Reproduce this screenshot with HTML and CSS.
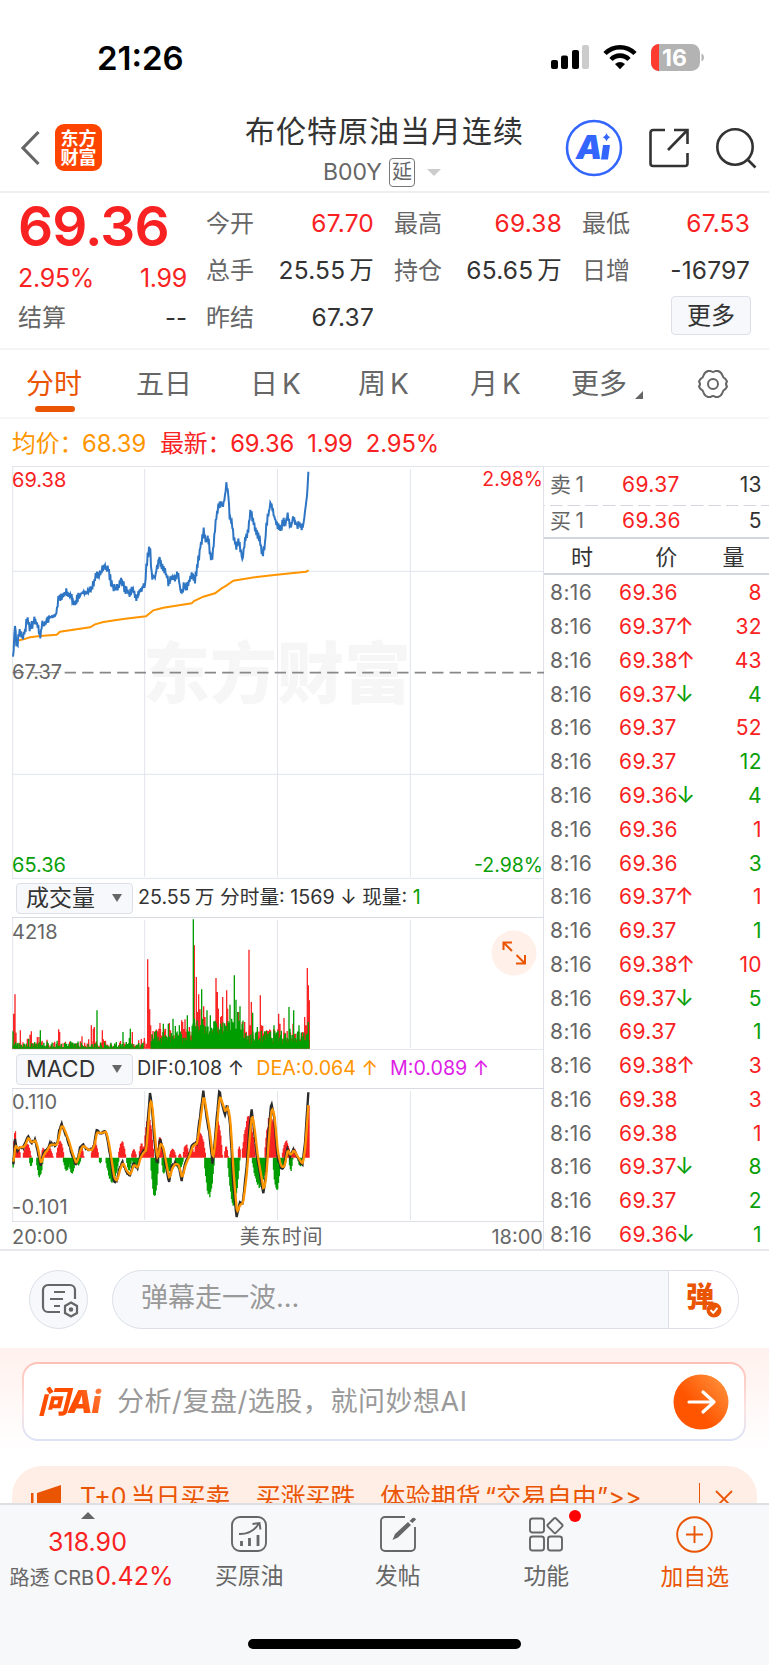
FILE: index.html
```html
<!DOCTYPE html>
<html lang="zh-CN">
  <head>
    <meta charset="utf-8">
    <title>布伦特原油当月连续</title>
    <link rel="stylesheet" href="styles.css">
  </head>
<body>
    <!-- 状态栏 -->
    <div class="status">
        <span class="clock">21:26</span>
        <svg class="status-icons" width="154" height="28" viewBox="0 0 154 28">
            <rect x="1" y="17" width="7" height="9" rx="2"/>
            <rect x="11" y="12.500" width="7" height="13.500" rx="2"/>
            <rect x="22" y="7" width="7" height="19" rx="2"/>
            <rect x="32" y="2" width="7" height="24" rx="2" fill="#ccc"/>
            <g fill="none" stroke="#000" stroke-width="4.600">
                <path d="M55 10.500a21 21 0 0 1 30 0"/>
                <path d="M61 16.500a12.500 12.500 0 0 1 18 0"/>
            </g>
            <path d="M70 26.200l-5-5.200q5-4 10 0z"/>
            <rect x="101" y="1" width="49" height="27" rx="8.500" fill="#b3b3b3"/>
            <path d="M109 1h-0.500a8 8 0 0 0-7.500 8v11a8 8 0 0 0 7.500 8h0.500z" fill="#ff3b30"/>
            <path d="M151.500 10.500q2.500 1 2.500 4t-2.500 4z" fill="#b3b3b3"/>
            <text x="124.500" y="22.500" class="battery-text">16</text>
        </svg>
    </div>

    <!-- 标题栏 -->
    <div class="header">
        <svg class="back" width="22" height="36" viewBox="0 0 22 36"><path d="M18.500 2L3 18l15.500 16" fill="none" stroke="#666" stroke-width="3.200"/></svg>
        <div class="logo">东方<br>财富</div>
        <div class="title">
            <div class="name">布伦特原油当月连续</div>
            <div class="code"><span>B00Y</span><i class="delay">延</i><i class="drop"></i></div>
        </div>
        <div class="tools">
            <svg width="58" height="58" viewBox="0 0 58 58">
                <circle cx="29" cy="29" r="27" fill="none" stroke="#3366ff" stroke-width="2.600"/>
                <text x="11" y="39.500" class="ai-text">A</text>
                <path d="M38 26h7l-2 14.500h-7zM41.500 14q1 3.500 4.200 4.200-3.200.8-4.200 4.300-1-3.500-4.200-4.300 3.200-.7 4.200-4.200z" fill="#3366ff"/>
            </svg>
            <svg width="40" height="40" viewBox="0 0 40 40" fill="none" stroke="#333" stroke-width="2.600">
                <path d="M16 2H4a2.500 2.500 0 0 0-2.500 2.500v31A2.500 2.500 0 0 0 4 38h32a2.500 2.500 0 0 0 2.500-2.500V25M25 2h13.500v14M38 2.500L19 22"/>
            </svg>
            <svg width="42" height="42" viewBox="0 0 42 42" fill="none" stroke="#333" stroke-width="2.600">
                <circle cx="20" cy="20" r="17.700"/><path d="M32 32l8.500 8.500"/>
            </svg>
        </div>
    </div>

    <!-- 行情 -->
    <div class="quote">
        <div class="main">
            <div class="price">69.36</div>
            <div class="pair red"><span>2.95%</span><span>1.99</span></div>
            <div class="pair"><label>结算</label><span>--</span></div>
        </div>
        <div class="cells">
            <div><label>今开</label><span class="red">67.70</span></div>
            <div><label>最高</label><span class="red">69.38</span></div>
            <div><label>最低</label><span class="red">67.53</span></div>
            <div><label>总手</label><span>25.55<i class="gap"></i>万</span></div>
            <div><label>持仓</label><span>65.65<i class="gap"></i>万</span></div>
            <div><label>日增</label><span>-16797</span></div>
            <div><label>昨结</label><span>67.37</span></div>
            <div></div>
            <div><button class="more">更多</button></div>
        </div>
    </div>

    <!-- 周期切换 -->
    <div class="tabs">
        <span class="active">分时</span>
        <span>五日</span>
        <span>日<i class="gap"></i>K</span>
        <span>周<i class="gap"></i>K</span>
        <span>月<i class="gap"></i>K</span>
        <span class="tab-more">更多</span>
        <svg width="34" height="32" viewBox="0 0 34 32" fill="none" stroke="#666" stroke-width="2">
            <path d="M12 3h2.500q2.500 1.800 5 0H22q3.500 1.200 4.500 4.500.5 2.500 3 3.500l1.500 2.500q-2 2.500 0 5L29.500 21q-2.500 1-3 3.500-1 3.300-4.500 4.500h-2.500q-2.500-1.800-5 0H12q-3.500-1.200-4.500-4.500-.5-2.500-3-3.500L3 18.500q2-2.500 0-5L4.500 11q2.500-1 3-3.500Q8.500 4.200 12 3z"/>
            <circle cx="17" cy="16" r="5"/>
        </svg>
    </div>

    <div class="summary">
        <span class="orange">均价：</span><span class="orange">68.39</span>
        <span class="red">最新：</span><span class="red">69.36</span><span class="red">1.99</span><span class="red">2.95%</span>
    </div>

    <div class="board">
        <!-- 左侧图表 -->
        <div class="charts">
            <div class="chart chart-price">
                <b class="watermark">东方财富</b>
                <svg id="price" width="532" height="413" viewBox="36 18 1596 1239"></svg>
                <span class="tl red">69.38</span>
                <span class="tr red">2.98%</span>
                <span class="mid">67.37</span>
                <span class="bl green">65.36</span>
                <span class="br green">-2.98%</span>
            </div>
            <div class="bar bar-vol">
                <div class="select"><span>成交量</span><i></i></div>
                <span>25.55<i class="gap"></i>万 分时量: 1569 <em>↓</em> 现量: <span class="green">1</span></span>
            </div>
            <div class="chart chart-vol">
                <svg id="volume" width="532" height="133" viewBox="36 141 1596 399"></svg>
                <span class="tl">4218</span>
                <svg class="expand" width="46" height="46" viewBox="0 0 46 46">
                    <circle cx="23" cy="23" r="22.500" fill="#fff0e9"/>
                    <path d="M12.500 20v-7.500H21M13 13l8 8M34 25v8.500h-9M33.500 33l-8-8" fill="none" stroke="#ea5504" stroke-width="2"/>
                </svg>
            </div>
            <div class="bar bar-macd">
                <div class="select"><span>MACD</span><i></i></div>
                <span>DIF:0.108 <em>↑</em></span>
                <span class="orange">DEA:0.064 <em>↑</em></span>
                <span class="purple">M:0.089 <em>↑</em></span>
            </div>
            <div class="chart chart-macd">
                <svg id="macd" width="532" height="134" viewBox="36 114 1596 402"></svg>
                <span class="tl">0.110</span>
                <span class="bl">-0.101</span>
            </div>
            <div class="times"><span>20:00</span><span class="zone">美东时间</span><span>18:00</span></div>
        </div>

        <!-- 右侧盘口明细 -->
        <div class="detail">
            <div class="row ask"><span>卖<i class="gap"></i>1</span><span class="red">69.37</span><span>13</span></div>
            <div class="row bid"><span>买<i class="gap"></i>1</span><span class="red">69.36</span><span>5</span></div>
            <div class="head"><span>时</span><span>价</span><span>量</span></div>
            <div id="ticks"></div>
        </div>
    </div>

    <!-- 弹幕 -->
    <div class="comment">
        <div class="round">
            <svg width="38" height="36" viewBox="0 0 38 36" fill="none" stroke="#666" stroke-width="2.200">
                <path d="M19 29H7a5 5 0 0 1-5-5V7a5 5 0 0 1 5-5h22a5 5 0 0 1 5 5v9M13 9h11M9 16h13M13 23h6"/>
                <path d="M30 19.500l6 3.500v7l-6 3.500-6-3.500v-7z"/><circle cx="30" cy="26.500" r="1.200" fill="#666"/>
            </svg>
        </div>
        <div class="field">
            <span class="placeholder">弹幕走一波...</span>
            <div class="danmu">弹
                <svg width="16" height="16" viewBox="0 0 16 16"><circle cx="8" cy="8" r="7.500" fill="#ea5504"/><path d="M4.500 8l2.800 2.800 4.200-5" fill="none" stroke="#fff" stroke-width="1.800"/></svg>
            </div>
        </div>
    </div>

    <!-- 问AI -->
    <div class="ask-ai">
        <div class="card">
            <span class="ask-logo">问Ai</span>
            <span class="placeholder">分析/复盘/选股，就问妙想AI</span>
            <svg width="56" height="56" viewBox="0 0 56 56">
                <defs><linearGradient id="go" x1="0.200" y1="0.800" x2="0.900" y2="0.200"><stop offset="0.300" stop-color="#ff5500"/><stop offset="1" stop-color="#ff8833"/></linearGradient></defs>
                <circle cx="28" cy="28" r="27.500" fill="url(#go)"/>
                <path d="M16 28h25M30 18l11 10-11 10" fill="none" stroke="#fff" stroke-width="3.200" stroke-linecap="round" stroke-linejoin="round"/>
            </svg>
        </div>
    </div>

    <!-- 广告条 -->
    <div class="promo-wrap">
        <div class="promo">
            <svg width="32" height="30" viewBox="0 0 32 30" fill="#ea5504"><path d="M0 8h2.500v22H0zM6 8l24-8v30H6z"/></svg>
            <span>T+0<i class="gap"></i>当日买卖</span><span>买涨买跌</span><span>体验期货<i class="gap"></i>“交易自由”&gt;&gt;</span>
            <i class="line"></i>
            <svg width="18" height="18" viewBox="0 0 18 18" stroke="#ea5504" stroke-width="1.800"><path d="M1 1l16 16M17 1L1 17"/></svg>
        </div>
    </div>

    <!-- 底部菜单 -->
    <div class="footer">
        <div class="nav">
            <div class="index">
                <i></i>
                <b class="red">318.90</b>
                <p>路透<i class="gap"></i>CRB<span class="red">0.42%</span></p>
            </div>
            <div class="item">
                <svg width="36" height="36" viewBox="0 0 36 36" fill="none" stroke="#666" stroke-width="1.900">
                    <rect x="1" y="1" width="34" height="34" rx="8"/><path d="M8 18q13 .500 20-10.500M21.500 8l7-1 1 6.500"/><path d="M10.500 30v-5M18.500 30v-8M27 30V19" stroke-width="2.800"/>
                </svg>
                <span>买原油</span>
            </div>
            <div class="item">
                <svg width="36" height="36" viewBox="0 0 36 36" fill="none" stroke="#666" stroke-width="1.900">
                    <path d="M25 1H5a4 4 0 0 0-4 4v26a4 4 0 0 0 4 4h26a4 4 0 0 0 4-4V11"/><path d="M12.500 24l2.500-6L28 6l3 3-13 12.500zM29.500 5l3-3q2.500-1 3.500 1.500L32.500 7z" fill="#666" stroke="none"/>
                </svg>
                <span>发帖</span>
            </div>
            <div class="item">
                <svg width="36" height="36" viewBox="0 0 36 36" fill="none" stroke="#666" stroke-width="1.900">
                    <rect x="2" y="2.500" width="14" height="14" rx="2.500"/><rect x="2" y="20.500" width="14" height="14" rx="2.500"/><rect x="20" y="20.500" width="14" height="14" rx="2.500"/><rect x="21.300" y="3.800" width="11.500" height="11.500" rx="1.500" transform="rotate(45 27 9.500)"/>
                </svg>
                <i class="dot"></i>
                <span>功能</span>
            </div>
            <div class="item add">
                <svg width="37" height="37" viewBox="0 0 37 37" fill="none" stroke="#ea5504" stroke-width="1.900"><circle cx="18.500" cy="18.500" r="17.300"/><path d="M18.500 10v17M10 18.500h17"/></svg>
                <span>加自选</span>
            </div>
        </div>
        <div class="home"></div>
    </div>
    <script src="chart.js"></script>
</body>
</html>
```
FILE: styles.css
```css
* {
    box-sizing: border-box;
    margin: 0;
    padding: 0;
}
body {
    width: 769px;
    height: 1665px;
    overflow: hidden;
    background: #fff;
    color: #333;
    font-family: Inter, "Noto Sans CJK SC", sans-serif;
    font-size: 24px;
    line-height: 1;
    white-space: nowrap;
}
i, em {
    font-style: normal;
}
svg {
    display: block;
    flex: none;
}
.red { color: #f92222 !important; }
.green { color: #0a9f0a !important; }
.orange { color: #ff9500 !important; }
.purple { color: #dc1ee6 !important; }
.gap {
    display: inline-block;
    width: 4px;
}

/* 状态栏 */
.status {
    display: flex;
    justify-content: space-between;
    height: 98px;
    padding: 41px 65px 0 97px;
    color: #000;
}
.clock {
    font-size: 33px;
    font-weight: 600;
    line-height: 34px;
}
.status-icons {
    margin-top: 2px;
}
.battery-text {
    font-size: 23px;
    font-weight: 700;
    fill: #fff;
    text-anchor: middle;
}

/* 标题栏 */
.header {
    display: flex;
    align-items: center;
    position: relative;
    height: 95px;
    padding: 6px 12px 0 20px;
    border-bottom: 2px solid #eee;
}
.logo {
    width: 47px;
    height: 47px;
    margin-left: 13px;
    padding-top: 5px;
    border-radius: 9px;
    background: #ff4400;
    color: #fff;
    font-size: 18px;
    font-weight: 700;
    line-height: 19px;
    text-align: center;
}
.title {
    flex: 1;
    margin-left: 1px;
    padding-top: 6px;
    text-align: center;
}
.title .name {
    padding-left: 97px;
    text-align: left;
    margin-left: 45px;
    font-size: 30px;
    line-height: 32px;
    letter-spacing: 1px;
}
.code {
    display: flex;
    align-items: center;
    margin: 11px 0 0 220px;
    color: #666;
    font-size: 23px;
}
.delay {
    width: 26px;
    height: 29px;
    margin-left: 7px;
    border: 1.500px solid #777;
    border-radius: 4px;
    font-size: 20px;
    line-height: 26px;
}
.drop {
    margin-left: 12px;
    border: 7px solid transparent;
    border-top-color: #ccc;
    border-bottom: 0;
}
.tools {
    display: flex;
    align-items: center;
    gap: 26px;
}
.ai-text {
    font-family: Inter, sans-serif;
    font-size: 33px;
    font-weight: 900;
    font-style: italic;
    fill: #3366ff;
}

/* 行情 */
.quote {
    display: flex;
    height: 157px;
    padding: 7px 19px 0 18px;
    border-bottom: 2px solid #f4f4f4;
}
.quote label {
    color: #666;
}
.main {
    width: 169px;
}
.price {
    height: 54px;
    color: #f92222;
    font-size: 55px;
    font-weight: 600;
    line-height: 53px;
    letter-spacing: -.9px;
}
.pair {
    display: flex;
    justify-content: space-between;
    height: 47px;
    line-height: 48px;
}
.pair:last-child {
    height: 33px;
    line-height: 33px;
}
.pair.red {
    font-size: 25px;
    letter-spacing: -.3px;
}
.cells {
    flex: 1;
    display: grid;
    grid-template-columns: repeat(3, 168px);
    grid-template-rows: repeat(3, 47px);
    column-gap: 20px;
    margin-left: 19px;
}
.cells div {
    display: flex;
    justify-content: space-between;
    align-items: center;
}
.cells span {
    font-size: 24.500px;
    letter-spacing: .2px;
}
.more {
    width: 80px;
    height: 39px;
    margin: -4px -1px 0 auto;
    border: 1.500px solid #dcdfe8;
    border-radius: 4px;
    background: #f7f8fb;
    color: #333;
    font: inherit;
}

/* 周期切换 */
.tabs {
    display: flex;
    align-items: center;
    height: 69px;
    padding-left: 26px;
    border-bottom: 2px solid #f6f6f6;
    color: #666;
    font-size: 28px;
}
.tabs span {
    position: relative;
    width: 110px;
}
.tabs span:nth-child(2) { width: 114px; }
.tabs span:nth-child(3) { width: 108px; }
.tabs span:nth-child(4) { width: 112px; }
.tabs span:nth-child(5) { width: 101px; }
.tabs .tab-more { width: 125px; }
.tabs .active {
    color: #ea5504;
}
.active::after {
    content: "";
    position: absolute;
    left: 9px;
    bottom: -14px;
    width: 40px;
    height: 6px;
    border-radius: 3px;
    background: #ea5504;
}
.tab-more::after {
    content: "";
    position: absolute;
    left: 64px;
    bottom: -1px;
    border-left: 8px solid transparent;
    border-bottom: 8px solid #666;
}

.summary {
    display: flex;
    gap: 14px;
    height: 47px;
    padding-left: 12px;
    line-height: 50px;
    font-size: 23.800px;
    letter-spacing: -.1px;
}
.summary span:nth-child(odd):nth-child(-n+3) {
    width: 56px;
}
.summary span:nth-child(n+5) {
    margin-left: -1px;
}

/* 图表 */
.board {
    display: flex;
    height: 785px;
    border-bottom: 2px solid #e6e8ec;
}
.charts {
    width: 544px;
    padding-left: 12px;
    border-right: 1px solid #dfe2ea;
}
.chart {
    position: relative;
    color: #666;
    font-size: 20px;
}
.chart > span {
    position: absolute;
    left: 0;
}
.chart .tl { top: 4px; }
.chart .tr { top: 4px; left: auto; right: 0; font-size: 19.500px; }
.chart .mid { top: 196px; }
.chart .bl { bottom: 4px; }
.chart .br { bottom: 4px; left: auto; right: 0; font-size: 19.500px; }
.chart-vol .tl { top: 5px; }
.chart-macd .bl { bottom: 5px; letter-spacing: .3px; }
.watermark {
    position: absolute;
    left: 131px;
    top: 168px;
    color: rgba(0, 0, 0, .035);
    font-size: 67px;
    font-weight: 900;
    line-height: 80px;
}
#price {
    position: relative;
}
.bar {
    display: flex;
    align-items: center;
    gap: 5px;
    padding-left: 4px;
    font-size: 19.700px;
}
.bar-vol { height: 38px; }
.bar-macd { height: 38px; gap: 12px; }
.bar-macd .select { margin-right: -8px; }
.select {
    display: flex;
    align-items: center;
    justify-content: space-between;
    width: 117px;
    height: 31px;
    padding: 0 10px 0 9px;
    border: 1px solid #dcdfe8;
    border-radius: 4px;
    background: #f7f8fb;
    font-size: 23px;
}
.select i {
    border: 5px solid transparent;
    border-top: 8px solid #666;
    border-bottom: 0;
}
.expand {
    position: absolute;
    right: 6px;
    top: 13px;
}
.times {
    display: flex;
    justify-content: space-between;
    color: #666;
    font-size: 20px;
    line-height: 31px;
}
.zone {
    margin-right: -4px;
    letter-spacing: .9px;
}

/* 盘口 */
.detail {
    flex: 1;
    border-top: 1px solid #e6e8ee;
    font-size: 21px;
    letter-spacing: .4px;
}
.row {
    display: grid;
    grid-template-columns: 69px 59px 1fr;
    align-items: center;
    height: 33.770px;
    padding: 0 7px 0 6px;
    color: #333;
}
.row span:first-child {
    color: #666;
}
.row span:last-child {
    text-align: right;
}
.row em {
    font-size: 23px;
    line-height: 20px;
    margin-left: -2px;
}
.ask { height: 39px; background: linear-gradient(90deg, #d3d6de 70%, transparent 0) 6px 100% / 17.600px 1.500px repeat-x; padding-bottom: 5px; grid-template-columns: 72px 59px 1fr; }
.bid { height: 33px; border-bottom: 2px solid #d3d6de; padding-bottom: 2px; grid-template-columns: 72px 59px 1fr; }
.head {
    display: flex;
    justify-content: space-between;
    height: 36px;
    margin-bottom: 1px;
    padding: 0 24px 0 27px;
    border-bottom: 2px solid #d3d6de;
    font-size: 22px;
    line-height: 37px;
}
.head span:nth-child(2) {
    margin-left: 17px;
}

/* 弹幕 */
.comment {
    display: flex;
    gap: 24px;
    height: 97px;
    padding: 19px 30px 0 29px;
}
.round {
    display: flex;
    align-items: center;
    justify-content: center;
    width: 59px;
    height: 59px;
    padding: 3px 0 0 2px;
    border: 1px solid #dcdfe8;
    border-radius: 50%;
    background: #f7f8fb;
}
.field {
    flex: 1;
    display: flex;
    justify-content: space-between;
    height: 59px;
    overflow: hidden;
    border: 1px solid #dcdfe8;
    border-radius: 30px;
    background: #f7f8fb;
    line-height: 53px;
}
.placeholder {
    color: #999;
    font-size: 27px;
}
.field .placeholder {
    padding-left: 28px;
}
.danmu {
    position: relative;
    width: 70px;
    padding-left: 17px;
    border-left: 1px solid #dcdfe8;
    background: #fff;
    color: #ea5504;
    font-size: 28px;
    font-weight: 900;
}
.danmu svg {
    position: absolute;
    left: 37px;
    top: 31px;
}

/* 问AI */
.ask-ai {
    height: 104px;
    padding: 14px 23px 0 22px;
    background: linear-gradient(#fff1ed, #fff);
}
.card {
    display: flex;
    align-items: center;
    height: 79px;
    padding: 0 15px 0 14px;
    border: 2.500px solid transparent;
    border-radius: 16px;
    background: linear-gradient(#fff, #fff) padding-box, linear-gradient(#ffc0b6, #fbe3e3 60%, #dbe3f6) border-box;
}
.card .placeholder {
    letter-spacing: .55px;
}
.ask-logo {
    width: 79px;
    background: linear-gradient(60deg, #ff4d00 50%, #ff9a66);
    -webkit-background-clip: text;
    color: transparent;
    font-size: 31px;
    font-weight: 900;
    font-style: italic;
    line-height: 38px;
    letter-spacing: -1px;
}
.card svg {
    margin-left: auto;
}

/* 广告条 */
.promo-wrap {
    height: 51px;
    padding: 14px 12px 0;
    overflow: hidden;
}
.promo {
    display: flex;
    height: 66px;
    padding: 0 24px 0 19px;
    border-radius: 30px;
    background: #ffeee5;
    color: #ea5504;
    font-size: 25px;
    line-height: 63px;
}
.promo span { margin-right: 25px; }
.promo span + span { letter-spacing: -.1px; }
.promo span:nth-of-type(3) { letter-spacing: .2px; }
.promo svg { margin: 19px 17px 0 0; }
.promo .line {
    width: 1.500px;
    height: 32px;
    margin: 17px 15px 0 auto;
    background: #ea5504;
}
.promo .line + svg { margin: 24px 0 0; }

/* 底部菜单 */
.footer {
    height: 162px;
    border-top: 2px solid #dddfe2;
    background: #f7f8fa;
    color: #666;
}
.nav {
    display: flex;
    height: 134px;
}
.index {
    width: 175px;
    padding-top: 7px;
    text-align: center;
}
.index > i {
    display: block;
    width: 0;
    margin: 0 auto;
    border: 7px solid transparent;
    border-top: 0;
    border-bottom-color: #666;
}
.index b {
    display: block;
    margin-top: 10px;
    font-size: 25px;
    font-weight: 400;
    line-height: 26px;
}
.index p {
    margin-top: 4px;
    padding-left: 8px;
    font-size: 20px;
    line-height: 34px;
}
.index p span {
    margin-left: 1px;
    font-size: 25px;
}
.item {
    position: relative;
    display: flex;
    flex-direction: column;
    align-items: center;
    width: 148.500px;
    padding-top: 11px;
    font-size: 22.800px;
}
.item span {
    margin-top: 11px;
    line-height: 26px;
}
.add {
    color: #ea5504;
}
.dot {
    position: absolute;
    left: 97px;
    top: 5px;
    width: 12px;
    height: 12px;
    border-radius: 50%;
    background: #ff0000;
}
.home {
    width: 273px;
    height: 10px;
    margin: 0 auto;
    border-radius: 5px;
    background: #000;
}
```
FILE: chart.js
```js
// 成交明细: 价格, 方向, 量, 颜色
var ticks = [
    ["69.36", "", 8, "red"], ["69.37", "↑", 32, "red"], ["69.38", "↑", 43, "red"], ["69.37", "↓", 4, "green"],
    ["69.37", "", 52, "red"], ["69.37", "", 12, "green"], ["69.36", "↓", 4, "green"], ["69.36", "", 1, "red"],
    ["69.36", "", 3, "green"], ["69.37", "↑", 1, "red"], ["69.37", "", 1, "green"], ["69.38", "↑", 10, "red"],
    ["69.37", "↓", 5, "green"], ["69.37", "", 1, "green"], ["69.38", "↑", 3, "red"], ["69.38", "", 3, "red"],
    ["69.38", "", 1, "red"], ["69.37", "↓", 8, "green"], ["69.37", "", 2, "green"], ["69.36", "↓", 1, "green"]
];
document.getElementById("ticks").innerHTML = ticks.map(function(t) {
    return '<div class="row"><span>8:16</span><span class="red">' + t[0] + '<em class="' + (t[1] == "↓" ? "green" : "red") + '">' + t[1] +
        '</em></span><span class="' + t[3] + '">' + t[2] + '</span></div>';
}).join("");

// 固定种子, 保证每次画出的曲线一致
var seed = 7;
function rnd() {
    seed = (seed * 16807) % 2147483647;
    return seed / 2147483647;
}
function at(list, x) {
    for (var i = 2; i < list.length; i += 2) {
        if (x <= list[i]) {
            return list[i - 1] + (list[i + 1] - list[i - 1]) * (x - list[i - 2]) / (list[i] - list[i - 2]);
        }
    }
    return list[list.length - 1];
}
function line(points, color, width) {
    return '<polyline fill="none" stroke="' + color + '" stroke-width="' + width + '" points="' + points.join(" ") + '"/>';
}
function path(d, color, width, extra) {
    return '<path fill="none" stroke="' + color + '" stroke-width="' + width + '" d="' + d + '" ' + (extra || "") + '/>';
}
function grid(top, bottom) {
    var d = "";
    [434, 832.5, 1231].forEach(function(x) { d += "M" + x + " " + (top + 8) + "V" + (bottom - 6); });
    return path(d, "#e1e4ed", 3) + path("M38 " + top + "V" + bottom, "#e1e4ed", 3);
}

// 分时线
var price = [39,590,45,495,50,565,58,515,66,532,75,520,82,468,88,505,96,495,104,480,112,495,120,528,127,490,135,497,145,475,155,470,168,466,
    176,410,184,415,200,395,212,405,220,435,232,415,245,398,262,400,272,385,280,370,288,338,296,350,304,330,316,315,326,335,334,370,342,385,352,385,
    364,362,374,385,388,405,396,385,410,418,420,390,435,375,438,330,443,290,450,262,455,345,465,352,478,290,486,325,495,330,505,365,515,350,525,355,
    535,345,543,403,552,375,560,382,575,345,585,358,595,300,603,250,612,212,618,250,625,235,632,295,638,290,647,185,658,128,664,138,674,118,680,68,
    685,105,688,165,695,190,702,240,710,262,716,240,727,298,735,240,745,215,752,150,760,190,768,218,778,232,785,280,793,270,800,190,806,160,813,125,
    820,160,826,180,835,200,842,208,850,180,855,198,862,163,872,205,880,170,886,188,893,195,900,198,910,198,918,130,922,100,925,35];
var avg = [39,545,70,538,90,532,120,528,170,524,180,515,270,502,285,493,310,486,370,477,438,469,460,451,490,443,575,430,582,423,610,410,645,400,665,385,680,376,700,362,770,351,830,344,880,339,918,335,926,331];
var pts = [];
for (var x = 39, n = 0; x <= 925; x += 2, n++) {
    var amp = x > 905 || (x > 148 && x < 172) ? 3 : (x > 236 && x < 272 ? 8 : 14);
    // 上下交替抖动
    pts.push(x + "," + (at(price, x) + (n % 2 ? 1 : -1) * rnd() * amp).toFixed(1));
}
pts.push("925,35");
var avgPts = [];
for (var i = 0; i < avg.length; i += 2) {
    avgPts.push(avg[i] + "," + avg[i + 1]);
}
document.getElementById("price").innerHTML = grid(19, 1256) +
    path("M36 19.500H1632M38 334H1632M38 943H1632M36 1255H1632", "#e1e4ed", 3) +
    path("M194 638H1632", "#888", 5, 'stroke-dasharray="34 18.500"') + path("M38 638H184", "#888", 4, 'stroke-dasharray="34 18.500"') +
    line(avgPts, "#ff9500", 6) + line(pts, "#2e75c4", 6);

// 成交量, 底部 y = 536
var red = [41,105,45,163,48,48,61,55,82,30,94,52,90,42,112,35,117,35,141,27,176,58,179,50,241,22,246,37,266,28,274,70,280,60,283,65,307,55,310,28,359,18,397,50,416,25,
    433,32,443,268,446,185,449,118,452,70,480,77,495,60,508,77,545,85,548,80,555,88,568,65,583,310,589,215,592,110,596,163,600,118,611,127,615,95,648,212,652,170,655,120,662,95,665,98,
    668,155,680,175,683,120,716,110,727,80,734,80,747,297,751,70,754,140,781,160,785,70,788,68,800,55,806,52,836,105,840,75,852,92,879,75,908,50,914,95,918,70,922,242,925,190,928,145];
var green = [39,52,73,15,86,30,121,55,200,14,212,22,226,15,291,115,333,18,345,12,369,50,388,32,391,60,490,75,505,75,519,90,526,68,538,70,562,100,580,388,583,90,605,178,608,90,621,115,631,100,
    643,82,675,70,690,132,695,90,703,220,708,147,713,110,720,127,758,108,772,65,822,70,832,50,867,125,870,60,881,115,897,70,893,50,925,80];
var rd = "", gd = "";
for (x = 39; x < 929; x += 2.5) {
    var busy = x > 452;
    rd += "M" + x + " 536v" + -(busy ? 20 + rnd() * 40 : 3 + rnd() * rnd() * 30).toFixed(1);
    var g = x > 575 && x < 730 ? 40 + rnd() * 45 : (busy ? 15 + rnd() * 40 : (x > 430 ? 0 : 3 + rnd() * rnd() * 22));
    gd += "M" + x + " 536v" + -g.toFixed(1);
}
for (i = 0; i < red.length; i += 2) { rd += "M" + red[i] + " 536v" + -red[i + 1]; }
for (i = 0; i < green.length; i += 2) { gd += "M" + green[i] + " 536v" + -green[i + 1]; }
document.getElementById("volume").innerHTML = grid(142, 540) +
    path("M36 142.500H1632", "#d8dbe3", 3) + path("M36 539H1632", "#e1e4ed", 3) + path(rd, "#fa2525", 4) + path(gd, "#009d00", 4);

// MACD 柱: 起点, 终点, 峰值
var up = [39,51,85,50,62,30,68,94,45,124,135,32,134,160,32,168,193,50,234,252,36,272,297,50,354,378,50,393,410,27,416,433,46,430,462,130,471,490,68,507,529,28,534,545,12,
    548,568,42,566,584,32,581,618,82,640,668,115,672,685,36,713,723,36,725,767,125,793,831,135,845,872,52,872,893,28,912,944,165];
var down = [37,43,32,87,99,27,108,130,60,188,212,40,205,228,50,226,244,24,296,306,18,316,358,76,378,396,40,394,421,30,451,477,120,484,500,52,496,516,44,524,552,36,612,644,118,
    682,720,148,755,803,90,818,842,105,840,860,34,866,879,40,892,911,28];
function humps(list, dir) {
    var d = "";
    for (var i = 0; i < list.length; i += 3) {
        for (var x = list[i]; x <= list[i + 1] && x < 929; x += 2.5) {
            var h = Math.pow(Math.sin(Math.PI * (x - list[i]) / (list[i + 1] - list[i])), 0.9) * list[i + 2];
            d += "M" + x + " 323v" + (dir * (h || 0) * (0.88 + rnd() * 0.14)).toFixed(1);
        }
    }
    return d;
}
var dif = [40,340,45,270,52,300,60,290,70,292,76,280,84,258,92,280,105,270,112,295,122,350,130,310,140,300,150,282,165,285,172,280,178,240,184,220,192,240,205,275,215,310,
    228,345,240,295,248,285,262,300,275,300,283,280,290,238,297,250,318,245,328,300,342,395,350,392,360,350,368,335,378,365,390,375,400,340,412,355,420,320,430,305,438,300,
    444,200,450,130,456,170,462,260,471,345,480,270,490,300,498,350,507,395,515,350,525,340,535,345,545,390,555,340,565,320,577,285,590,280,600,200,610,125,618,190,628,250,
    638,345,646,250,658,120,665,160,675,190,682,165,690,220,700,400,710,505,718,460,728,460,740,350,748,240,755,178,762,240,772,330,780,370,790,430,798,370,805,250,814,155,
    822,200,832,320,843,355,852,350,862,290,870,320,880,298,890,320,907,345,915,280,925,125];
var difPts = [], deaPts = [], dea = 330;
for (x = 40; x <= 925; x += 2.5) {
    var v = at(dif, x);
    dea += (v - dea) * 0.48;
    difPts.push(x + "," + (v + (rnd() - 0.5) * 8).toFixed(1));
    deaPts.push(x + "," + dea.toFixed(1));
}
document.getElementById("macd").innerHTML = grid(115, 516) + path("M36 115.500H1632M36 515H1632", "#d8dbe3", 3) +
    path(humps(up, -1), "#f92222", 4) + path(humps(down, 1), "#009d00", 4) +
    line(difPts, "#2b2b2b", 7) + line(deaPts, "#ff9500", 7);
```
